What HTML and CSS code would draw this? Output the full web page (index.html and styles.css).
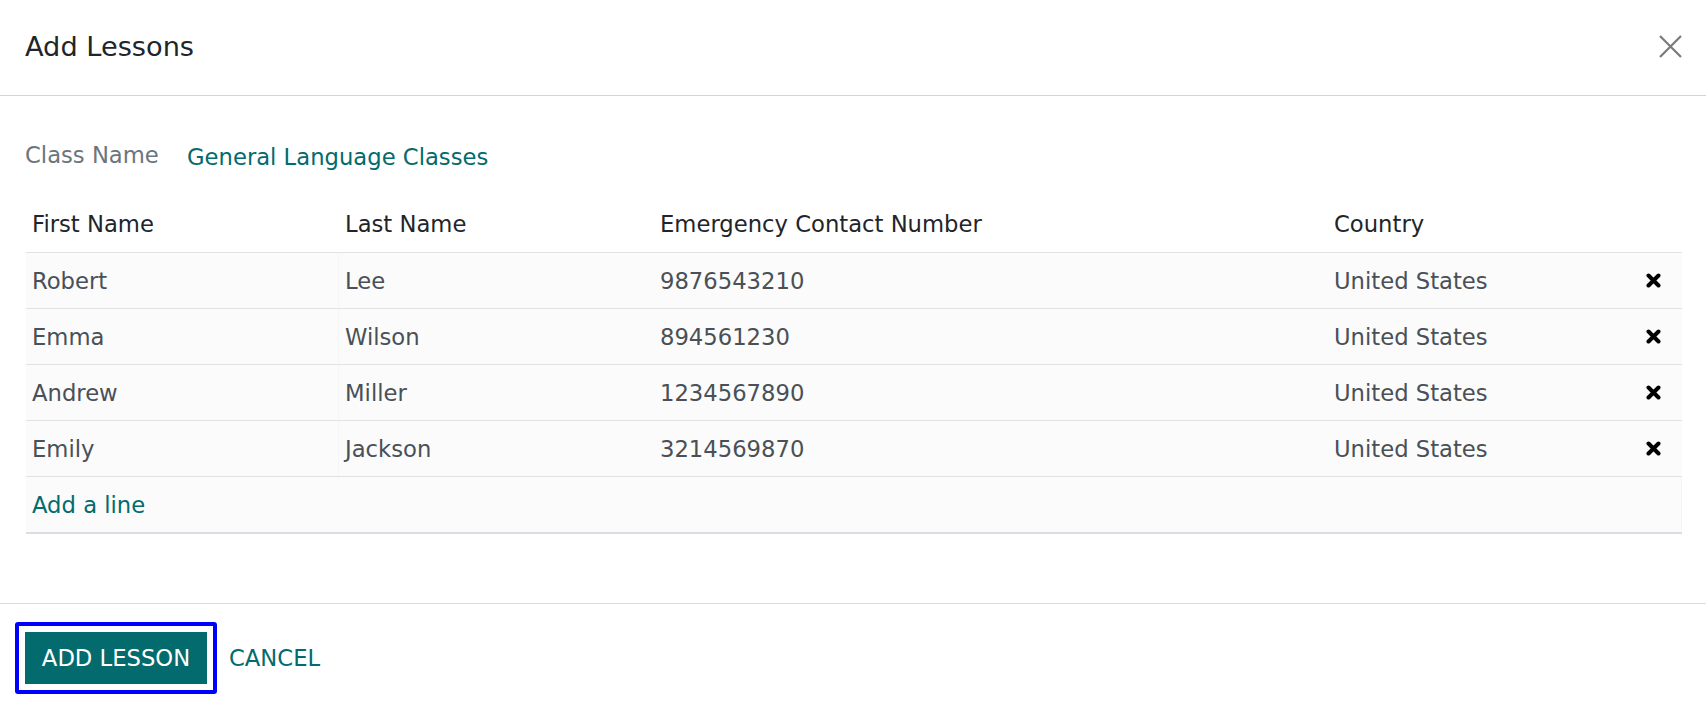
FILE: index.html
```html
<!DOCTYPE html>
<html lang="en">
<head>
<meta charset="utf-8">
<title>Add Lessons</title>
<link rel="stylesheet" href="styles.css">
</head>
<body>
<div class="dialog">
  <header class="dialog-header">
    <h1 class="dialog-title">Add Lessons</h1>
    <button class="close-btn" aria-label="Close">
      <svg width="23" height="23" viewBox="0 0 23 23"><path d="M1 1 L22 22 M22 1 L1 22" stroke="#7a7a7a" stroke-width="2.2" fill="none"/></svg>
    </button>
  </header>
  <main class="dialog-body">
    <div class="field">
      <span class="field-label">Class Name</span>
      <span class="field-value">General Language Classes</span>
    </div>
    <div class="grid">
      <div class="row head">
        <div class="cell">First Name</div>
        <div class="cell">Last Name</div>
        <div class="cell">Emergency Contact Number</div>
        <div class="cell">Country</div>
        <div class="cell"></div>
      </div>
      <div class="row">
        <div class="cell">Robert</div>
        <div class="cell">Lee</div>
        <div class="cell">9876543210</div>
        <div class="cell">United States</div>
        <div class="cell del"><svg width="15" height="15" viewBox="0 0 15 15"><path d="M2.5 2.5 L12.5 12.5 M12.5 2.5 L2.5 12.5" stroke="#000" stroke-width="4" stroke-linecap="round"/></svg></div>
      </div>
      <div class="row">
        <div class="cell">Emma</div>
        <div class="cell">Wilson</div>
        <div class="cell">894561230</div>
        <div class="cell">United States</div>
        <div class="cell del"><svg width="15" height="15" viewBox="0 0 15 15"><path d="M2.5 2.5 L12.5 12.5 M12.5 2.5 L2.5 12.5" stroke="#000" stroke-width="4" stroke-linecap="round"/></svg></div>
      </div>
      <div class="row">
        <div class="cell">Andrew</div>
        <div class="cell">Miller</div>
        <div class="cell">1234567890</div>
        <div class="cell">United States</div>
        <div class="cell del"><svg width="15" height="15" viewBox="0 0 15 15"><path d="M2.5 2.5 L12.5 12.5 M12.5 2.5 L2.5 12.5" stroke="#000" stroke-width="4" stroke-linecap="round"/></svg></div>
      </div>
      <div class="row">
        <div class="cell">Emily</div>
        <div class="cell">Jackson</div>
        <div class="cell">3214569870</div>
        <div class="cell">United States</div>
        <div class="cell del"><svg width="15" height="15" viewBox="0 0 15 15"><path d="M2.5 2.5 L12.5 12.5 M12.5 2.5 L2.5 12.5" stroke="#000" stroke-width="4" stroke-linecap="round"/></svg></div>
      </div>
      <div class="row add-row">
        <div class="cell link">Add a line</div>
      </div>
    </div>
  </main>
  <footer class="dialog-footer">
    <span class="btn-ring"><button class="btn-primary">ADD LESSON</button></span>
    <button class="btn-link">CANCEL</button>
  </footer>
</div>
</body>
</html>
```

FILE: styles.css
```css
* { box-sizing: border-box; }
html, body { margin: 0; padding: 0; background: #fff; }
body {
  font-family: "DejaVu Sans", "Liberation Sans", sans-serif;
  font-size: 22.7px;
  line-height: 34px;
  color: #495057;
}
.dialog { width: 1706px; min-height: 709px; }
.dialog-header {
  height: 96px;
  border-bottom: 1px solid #d4d4d8;
  display: flex;
  align-items: center;
  justify-content: space-between;
  padding: 0 24px 2px 25px;
}
.dialog-title {
  margin: 0;
  font-size: 27.2px;
  font-weight: normal;
  line-height: 40px;
  color: #212529;
}
.close-btn {
  border: 0;
  background: none;
  padding: 0;
  width: 23px;
  height: 23px;
  display: flex;
}
.dialog-body {
  padding: 42px 24px 69px 26px;
}
.field {
  display: flex;
  align-items: flex-start;
  height: 34px;
  margin-left: -1px;
}
.field-label {
  width: 162px;
  color: #6c757d;
}
.field-value {
  color: #036b6e;
  padding-top: 2px;
}
.grid { margin-top: 24px; }
.row {
  display: grid;
  grid-template-columns: 313px 315px 674px 297px 57px;
  height: 56px;
  border-bottom: 1px solid #e2e2e2;
  align-items: center;
  background: #fbfbfb;
}
.row.head {
  height: 57px;
  background: #fff;
  color: #212529;
}
.cell {
  padding-left: 6px;
  white-space: nowrap;
  height: 100%;
  display: flex;
  align-items: center;
}
.row:not(.head) .cell:first-child { border-right: 1px solid #f6f6f6; }
.cell.del {
  padding-left: 0;
  justify-content: center;
}
.row.add-row {
  height: 57px;
  border-bottom: 2px solid #dcdde2;
  grid-template-columns: 1fr;
}
.row.add-row .cell { border-right: 0; }
.link { color: #036b6e; }
.dialog-footer {
  border-top: 1px solid #dcdcdc;
  padding: 18px 0 16px 15px;
  display: flex;
  align-items: center;
}
.btn-ring {
  display: flex;
  border: 4px solid #0000ff;
  border-radius: 3px;
  padding: 6px;
}
.btn-primary {
  font-family: inherit;
  font-size: 22.7px;
  line-height: 34px;
  height: 52px;
  width: 182px;
  padding: 0;
  border: 0;
  border-radius: 0;
  background: #036b6e;
  color: #fff;
}
.btn-link {
  font-family: inherit;
  font-size: 22.7px;
  line-height: 34px;
  border: 0;
  background: none;
  padding: 0;
  margin-left: 12px;
  color: #036b6e;
}
```
